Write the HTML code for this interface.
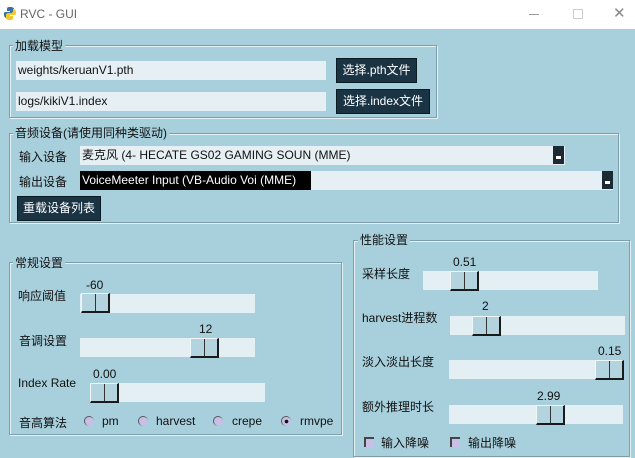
<!DOCTYPE html>
<html><head><meta charset="utf-8"><style>
*{margin:0;padding:0;box-sizing:border-box}
body{width:635px;height:458px;overflow:hidden;background:#a8cfdc;font-family:"Liberation Sans","Noto Sans CJK SC",sans-serif;font-size:12px;color:#111;position:relative}
.a{position:absolute;white-space:nowrap}
.tb{position:absolute;left:0;top:0;width:635px;height:29px;background:#fff}
.fr{position:absolute;border:1px solid #7f9ea9;box-shadow:1px 1px 0 #e6f1f4 inset,1px 1px 0 #e6f1f4}
.lg{position:absolute;background:#a8cfdc;padding:0 2px;line-height:14px;white-space:nowrap}
.en{position:absolute;background:#e6f0f4;height:19px;line-height:19px;padding-left:2px;white-space:nowrap;overflow:hidden}
.bt{position:absolute;background:#1b3444;color:#fff;text-align:center;border:1px solid #0c1a22;white-space:nowrap}
.tr{position:absolute;background:#e4eff3;height:19px}
.th{position:absolute;width:29px;height:20px;background:#b3d3df;border-left:1px solid #eef6f8;border-top:1px solid #eef6f8;border-right:2px solid #1a1a1a;border-bottom:2px solid #1a1a1a}
.th:after{content:"";position:absolute;left:13px;top:0;width:1px;height:17px;background:#333}
.rd{position:absolute;width:10px;height:10px;border-radius:50%;background:#c7bfe6;border-left:1px solid #555;border-top:1px solid #555}
.cb{position:absolute;width:10px;height:10px;background:#c7bfe6;border-left:2px solid #444;border-top:2px solid #444}
.arr{position:absolute;width:11px;height:18px;background:#1b2a33}
.arr:after{content:"";position:absolute;left:3px;top:10px;width:5px;height:3px;background:#fff}
</style></head><body>
<div class="tb"></div>
<svg class="a" style="left:3px;top:6px" width="14" height="15" viewBox="0 0 14 15"><path d="M7 1C4 1 4 2 4 3v2h3v1H2C1 6 1 8 1 9s1 3 2 3h1v-2c0-1 1-2 2-2h3c1 0 2-1 2-2V3C11 2 10 1 7 1z" fill="#3a6fa8"/><path d="M7 14c3 0 3-1 3-2v-2H7V9h5c1 0 1-2 1-3s-1-3-2-3h-1v2c0 1-1 2-2 2H5C4 7 3 8 3 9v3c0 1 1 2 4 2z" fill="#f2c830"/></svg>
<div class="a" style="left:20px;top:7px;color:#666;font-size:12px">RVC - GUI</div>
<div class="a" style="left:529px;top:14px;width:10px;height:1px;background:#999"></div>
<div class="a" style="left:573px;top:9px;width:10px;height:10px;border:1px solid #ccc"></div>
<div class="a" style="left:613px;top:4px;color:#888;font-size:15px">✕</div>

<div class="fr" style="left:9px;top:45px;width:428px;height:73px"></div>
<div class="lg" style="left:13px;top:39px">加载模型</div>
<div class="en" style="left:16px;top:61px;width:310px">weights/keruanV1.pth</div>
<div class="bt" style="left:336px;top:58px;width:81px;height:25px;line-height:23px">选择.pth文件</div>
<div class="en" style="left:16px;top:92px;width:310px">logs/kikiV1.index</div>
<div class="bt" style="left:336px;top:89px;width:94px;height:25px;line-height:23px">选择.index文件</div>

<div class="fr" style="left:9px;top:133px;width:610px;height:90px"></div>
<div class="lg" style="left:13px;top:126px">音频设备(请使用同种类驱动)</div>
<div class="a" style="left:19px;top:148px">输入设备</div>
<div class="en" style="left:80px;top:146px;width:485px">麦克风 (4- HECATE GS02 GAMING SOUN (MME)</div>
<div class="arr" style="left:553px;top:146px"></div>
<div class="a" style="left:19px;top:173px">输出设备</div>
<div class="en" style="left:80px;top:171px;width:533px;padding:0"><span style="background:#000;color:#fff;display:inline-block;width:231px;padding-left:2px;overflow:hidden">VoiceMeeter Input (VB-Audio Voi (MME)</span></div>
<div class="arr" style="left:602px;top:171px"></div>
<div class="bt" style="left:17px;top:196px;width:84px;height:25px;line-height:23px">重载设备列表</div>

<div class="fr" style="left:9px;top:262px;width:333px;height:173px"></div>
<div class="lg" style="left:13px;top:256px">常规设置</div>
<div class="a" style="left:18px;top:287px">响应阈值</div>
<div class="a" style="left:86px;top:278px">-60</div>
<div class="tr" style="left:80px;top:294px;width:175px"></div><div class="th" style="left:81px;top:293px"></div>
<div class="a" style="left:19px;top:332px">音调设置</div>
<div class="a" style="left:199px;top:322px">12</div>
<div class="tr" style="left:80px;top:338px;width:175px"></div><div class="th" style="left:190px;top:338px"></div>
<div class="a" style="left:18px;top:376px">Index Rate</div>
<div class="a" style="left:93px;top:367px">0.00</div>
<div class="tr" style="left:90px;top:383px;width:175px"></div><div class="th" style="left:90px;top:383px"></div>
<div class="a" style="left:19px;top:414px">音高算法</div>
<div class="rd" style="left:84px;top:416px"></div><div class="a" style="left:102px;top:414px">pm</div>
<div class="rd" style="left:138px;top:416px"></div><div class="a" style="left:156px;top:414px">harvest</div>
<div class="rd" style="left:213px;top:416px"></div><div class="a" style="left:232px;top:414px">crepe</div>
<div class="rd" style="left:281px;top:416px;background:radial-gradient(#111 25%,#c7bfe6 32%)"></div><div class="a" style="left:300px;top:414px">rmvpe</div>

<div class="fr" style="left:353px;top:240px;width:277px;height:217px"></div>
<div class="lg" style="left:358px;top:233px">性能设置</div>
<div class="a" style="left:362px;top:265px">采样长度</div>
<div class="a" style="left:453px;top:255px">0.51</div>
<div class="tr" style="left:423px;top:271px;width:175px"></div><div class="th" style="left:450px;top:271px"></div>
<div class="a" style="left:362px;top:309px">harvest进程数</div>
<div class="a" style="left:482px;top:299px">2</div>
<div class="tr" style="left:450px;top:316px;width:175px"></div><div class="th" style="left:472px;top:316px"></div>
<div class="a" style="left:362px;top:353px">淡入淡出长度</div>
<div class="a" style="left:598px;top:344px">0.15</div>
<div class="tr" style="left:449px;top:360px;width:174px"></div><div class="th" style="left:595px;top:360px"></div>
<div class="a" style="left:362px;top:398px">额外推理时长</div>
<div class="a" style="left:537px;top:389px">2.99</div>
<div class="tr" style="left:449px;top:405px;width:174px"></div><div class="th" style="left:536px;top:405px"></div>
<div class="cb" style="left:364px;top:437px"></div><div class="a" style="left:381px;top:434px">输入降噪</div>
<div class="cb" style="left:450px;top:437px"></div><div class="a" style="left:468px;top:434px">输出降噪</div>
</body></html>
